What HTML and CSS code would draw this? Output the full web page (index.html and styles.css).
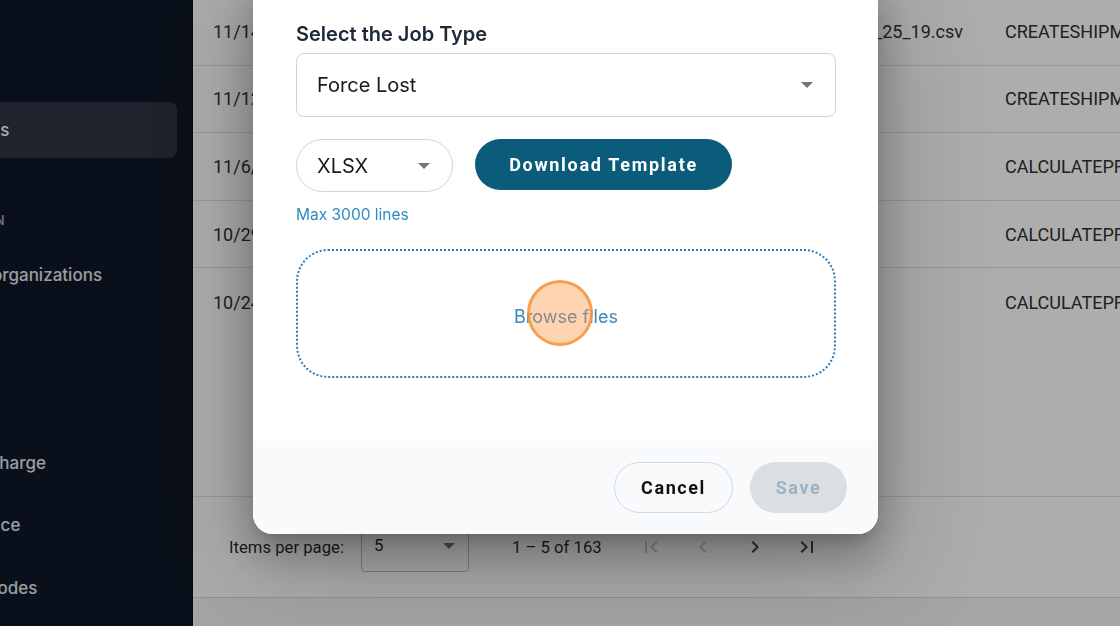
FILE: index.html
```html
<!DOCTYPE html>
<html>
<head>
<meta charset="utf-8">
<title>Jobs</title>
<link rel="stylesheet" href="styles.css">
</head>
<body>
<div class="app">
  <aside class="sidebar">
    <nav class="nav">
      <a class="nav-item">Hub</a>
      <a class="nav-item active">Tasks</a>
      <div class="nav-label">ADMIN</div>
      <a class="nav-item">My organizations</a>
      <a class="nav-item">API</a>
      <a class="nav-item">Tax</a>
      <a class="nav-item">Surcharge</a>
      <a class="nav-item">Invoice</a>
      <a class="nav-item">Zipcodes</a>
    </nav>
  </aside>
  <main class="main">
    <section class="table">
      <div class="row"><span class="c-date">11/14/2024</span><span class="c-file">upload_25_19.csv</span><span class="c-type">CREATESHIPMENT</span></div>
      <div class="row"><span class="c-date">11/12/2024</span><span class="c-file"></span><span class="c-type">CREATESHIPMENT</span></div>
      <div class="row"><span class="c-date">11/6/2024</span><span class="c-file"></span><span class="c-type">CALCULATEPRICE</span></div>
      <div class="row"><span class="c-date">10/29/2024</span><span class="c-file"></span><span class="c-type">CALCULATEPRICE</span></div>
      <div class="row"><span class="c-date">10/24/2024</span><span class="c-file"></span><span class="c-type">CALCULATEPRICE</span></div>
    </section>
    <section class="paginator">
      <span class="pg-label">Items per page:</span>
      <div class="pg-select"><span>5</span><span class="caret"></span></div>
      <span class="pg-range">1 – 5 of 163</span>
      <div class="pg-buttons">
        <span class="pg-btn disabled"><svg viewBox="0 0 24 24"><path d="M18.41 16.59L13.82 12l4.59-4.59L17 6l-6 6 6 6zM6 6h2v12H6z"/></svg></span>
        <span class="pg-btn disabled"><svg viewBox="0 0 24 24"><path d="M15.41 7.41L14 6l-6 6 6 6 1.41-1.41L10.83 12z"/></svg></span>
        <span class="pg-btn"><svg viewBox="0 0 24 24"><path d="M10 6L8.59 7.41 13.17 12l-4.58 4.59L10 18l6-6z"/></svg></span>
        <span class="pg-btn"><svg viewBox="0 0 24 24"><path d="M5.59 7.41L10.18 12l-4.59 4.59L7 18l6-6-6-6zM16 6h2v12h-2z"/></svg></span>
      </div>
    </section>
    <div class="page-rest"></div>
  </main>
</div>

<div class="backdrop">
  <div class="dialog">
    <div class="dialog-body">
      <h2 class="title">Select the Job Type</h2>
      <div class="select-box"><span>Force Lost</span><span class="caret"></span></div>
      <div class="format-row">
        <div class="pill-select"><span>XLSX</span><span class="caret"></span></div>
        <button class="btn-primary">Download Template</button>
      </div>
      <div class="hint">Max 3000 lines</div>
      <div class="dropzone">
        <span class="browse">Browse files</span>
        <span class="click-dot"></span>
      </div>
    </div>
    <div class="dialog-footer">
      <button class="btn-outline">Cancel</button>
      <button class="btn-disabled">Save</button>
    </div>
  </div>
</div>
</body>
</html>
```

FILE: styles.css
```css
* { box-sizing: border-box; }
html, body { margin: 0; padding: 0; }
body {
  width: 1120px;
  height: 626px;
  overflow: hidden;
  font-family: Inter, "Noto Sans", sans-serif;
}
.app { display: flex; height: 626px; }

/* Sidebar */
.sidebar {
  width: 193px;
  flex: none;
  background: #101828;
  overflow: hidden;
  border-right: 1px solid #0a0f19;
}
.nav {
  display: flex;
  flex-direction: column;
  gap: 6.6px;
  padding: 39px 15px 0 0;
  margin-left: -60px;
}
.nav-item {
  display: flex;
  align-items: center;
  height: 56px;
  flex: none;
  padding-left: 22px;
  border-radius: 8px;
  color: #e4e7ec;
  font-size: 17px;
  font-weight: 500;
  white-space: nowrap;
}
.nav-item.active { background: #2e3443; color: #ffffff; }
.nav-label {
  height: 76px;
  flex: none;
  padding: 48px 0 0 19px;
  line-height: 16px;
  font-size: 13px;
  font-weight: 600;
  letter-spacing: 0.3px;
  color: #98a2b3;
}

/* Main */
.main {
  flex: 1;
  min-width: 0;
  display: flex;
  flex-direction: column;
  background: #f3f4f6;
  overflow: hidden;
  font-family: Roboto, "Liberation Sans", sans-serif;
}
.table {
  flex: none;
  height: 499px;
  margin-top: -2px;
  background: #ffffff;
  border-bottom: 1px solid #e0e0e0;
}
.row {
  display: grid;
  grid-template-columns: 542px 250px 300px;
  height: 67.6px;
  align-items: center;
  padding-left: 20px;
  border-bottom: 1px solid #e0e0e0;
  font-size: 18px;
  color: #303030;
  white-space: nowrap;
}
.row:last-child { border-bottom: none; }
.c-file { text-align: right; padding-right: 42px; overflow: hidden; }

.paginator {
  flex: none;
  height: 101px;
  background: #ffffff;
  border-bottom: 1px solid #d8d8d8;
  display: flex;
  align-items: center;
  padding-left: 36px;
  font-size: 16.7px;
  color: rgba(0,0,0,.87);
}
.pg-label { margin-right: 17px; }
.pg-select {
  width: 108px;
  height: 52px;
  margin-top: -3px;
  border: 1px solid rgba(0,0,0,.25);
  border-radius: 4px;
  display: flex;
  align-items: center;
  justify-content: space-between;
  padding: 0 13px 0 12px;
}
.caret {
  width: 0;
  height: 0;
  border-left: 6px solid transparent;
  border-right: 6px solid transparent;
  border-top: 6px solid #757575;
}
.pg-range { margin-left: 43px; }
.pg-buttons { display: flex; gap: 12px; margin-left: 29px; }
.pg-btn {
  width: 40px;
  height: 40px;
  display: flex;
  align-items: center;
  justify-content: center;
}
.pg-btn svg { width: 24px; height: 24px; fill: rgba(0,0,0,.72); }
.pg-btn.disabled svg { fill: rgba(0,0,0,.2); }
.page-rest { flex: 1; }

/* Dialog */
.backdrop {
  position: fixed;
  inset: 0;
  background: rgba(0,0,0,.32);
  z-index: 10;
}
.dialog {
  position: absolute;
  left: 253px;
  bottom: 92px;
  width: 625px;
  background: #ffffff;
  border-radius: 20px;
  overflow: hidden;
  display: flex;
  flex-direction: column;
  box-shadow: 0 11px 15px -7px rgba(0,0,0,.2), 0 24px 38px 3px rgba(0,0,0,.14), 0 9px 46px 8px rgba(0,0,0,.12), 0 30px 110px 30px rgba(0,0,0,.14);
}
.dialog-body {
  display: flex;
  flex-direction: column;
  padding: 42px 42px 63px 43px;
}
.title {
  margin: 0;
  font-size: 20px;
  line-height: 24px;
  font-weight: 600;
  color: #1d2939;
}
.select-box {
  margin-top: 7px;
  height: 64px;
  border: 1px solid #cfd4dc;
  border-radius: 8px;
  display: flex;
  align-items: center;
  justify-content: space-between;
  padding: 0 22px 0 20px;
  font-size: 20px;
  color: #1a1a1a;
}
.format-row {
  margin-top: 22px;
  display: flex;
  align-items: flex-start;
  gap: 22px;
}
.pill-select {
  width: 157px;
  height: 53px;
  border: 1px solid #cfd4dc;
  border-radius: 27px;
  display: flex;
  align-items: center;
  justify-content: space-between;
  padding: 0 22px 0 20px;
  font-size: 20px;
  color: #1a1a1a;
}
.btn-primary {
  width: 257px;
  height: 51px;
  border: none;
  border-radius: 26px;
  background: #0b5b7b;
  color: #ffffff;
  font-family: Roboto, "Liberation Sans", sans-serif;
  font-size: 18px;
  font-weight: 700;
  letter-spacing: 1.7px;
  padding: 0;
}
.hint {
  margin-top: 13px;
  font-size: 15.5px;
  line-height: 20px;
  color: #2c8dc2;
}
.dropzone {
  position: relative;
  margin-top: 24px;
  height: 129px;
  border: 2px dotted #2f7bb3;
  border-radius: 32px;
  display: flex;
  align-items: center;
  justify-content: center;
  padding-top: 5px;
}
.browse { font-size: 18px; color: #3a87c0; }
.click-dot {
  position: absolute;
  left: 229px;
  top: 29px;
  width: 66px;
  height: 66px;
  border-radius: 50%;
  background: rgba(251,146,60,.4);
  border: 3px solid rgba(245,150,60,.85);
}
.dialog-footer {
  height: 93px;
  background: #f8fafc;
  display: flex;
  align-items: center;
  justify-content: flex-end;
  gap: 17px;
  padding-right: 31px;
}
.btn-outline, .btn-disabled {
  height: 51px;
  border-radius: 26px;
  font-family: Roboto, "Liberation Sans", sans-serif;
  font-size: 18px;
  font-weight: 700;
  letter-spacing: 1.6px;
  padding: 0;
}
.btn-outline {
  width: 119px;
  background: transparent;
  border: 1px solid #cfd8e3;
  color: #111111;
}
.btn-disabled {
  width: 97px;
  border: none;
  background: #dcdfe2;
  color: #9db0c4;
}
```
